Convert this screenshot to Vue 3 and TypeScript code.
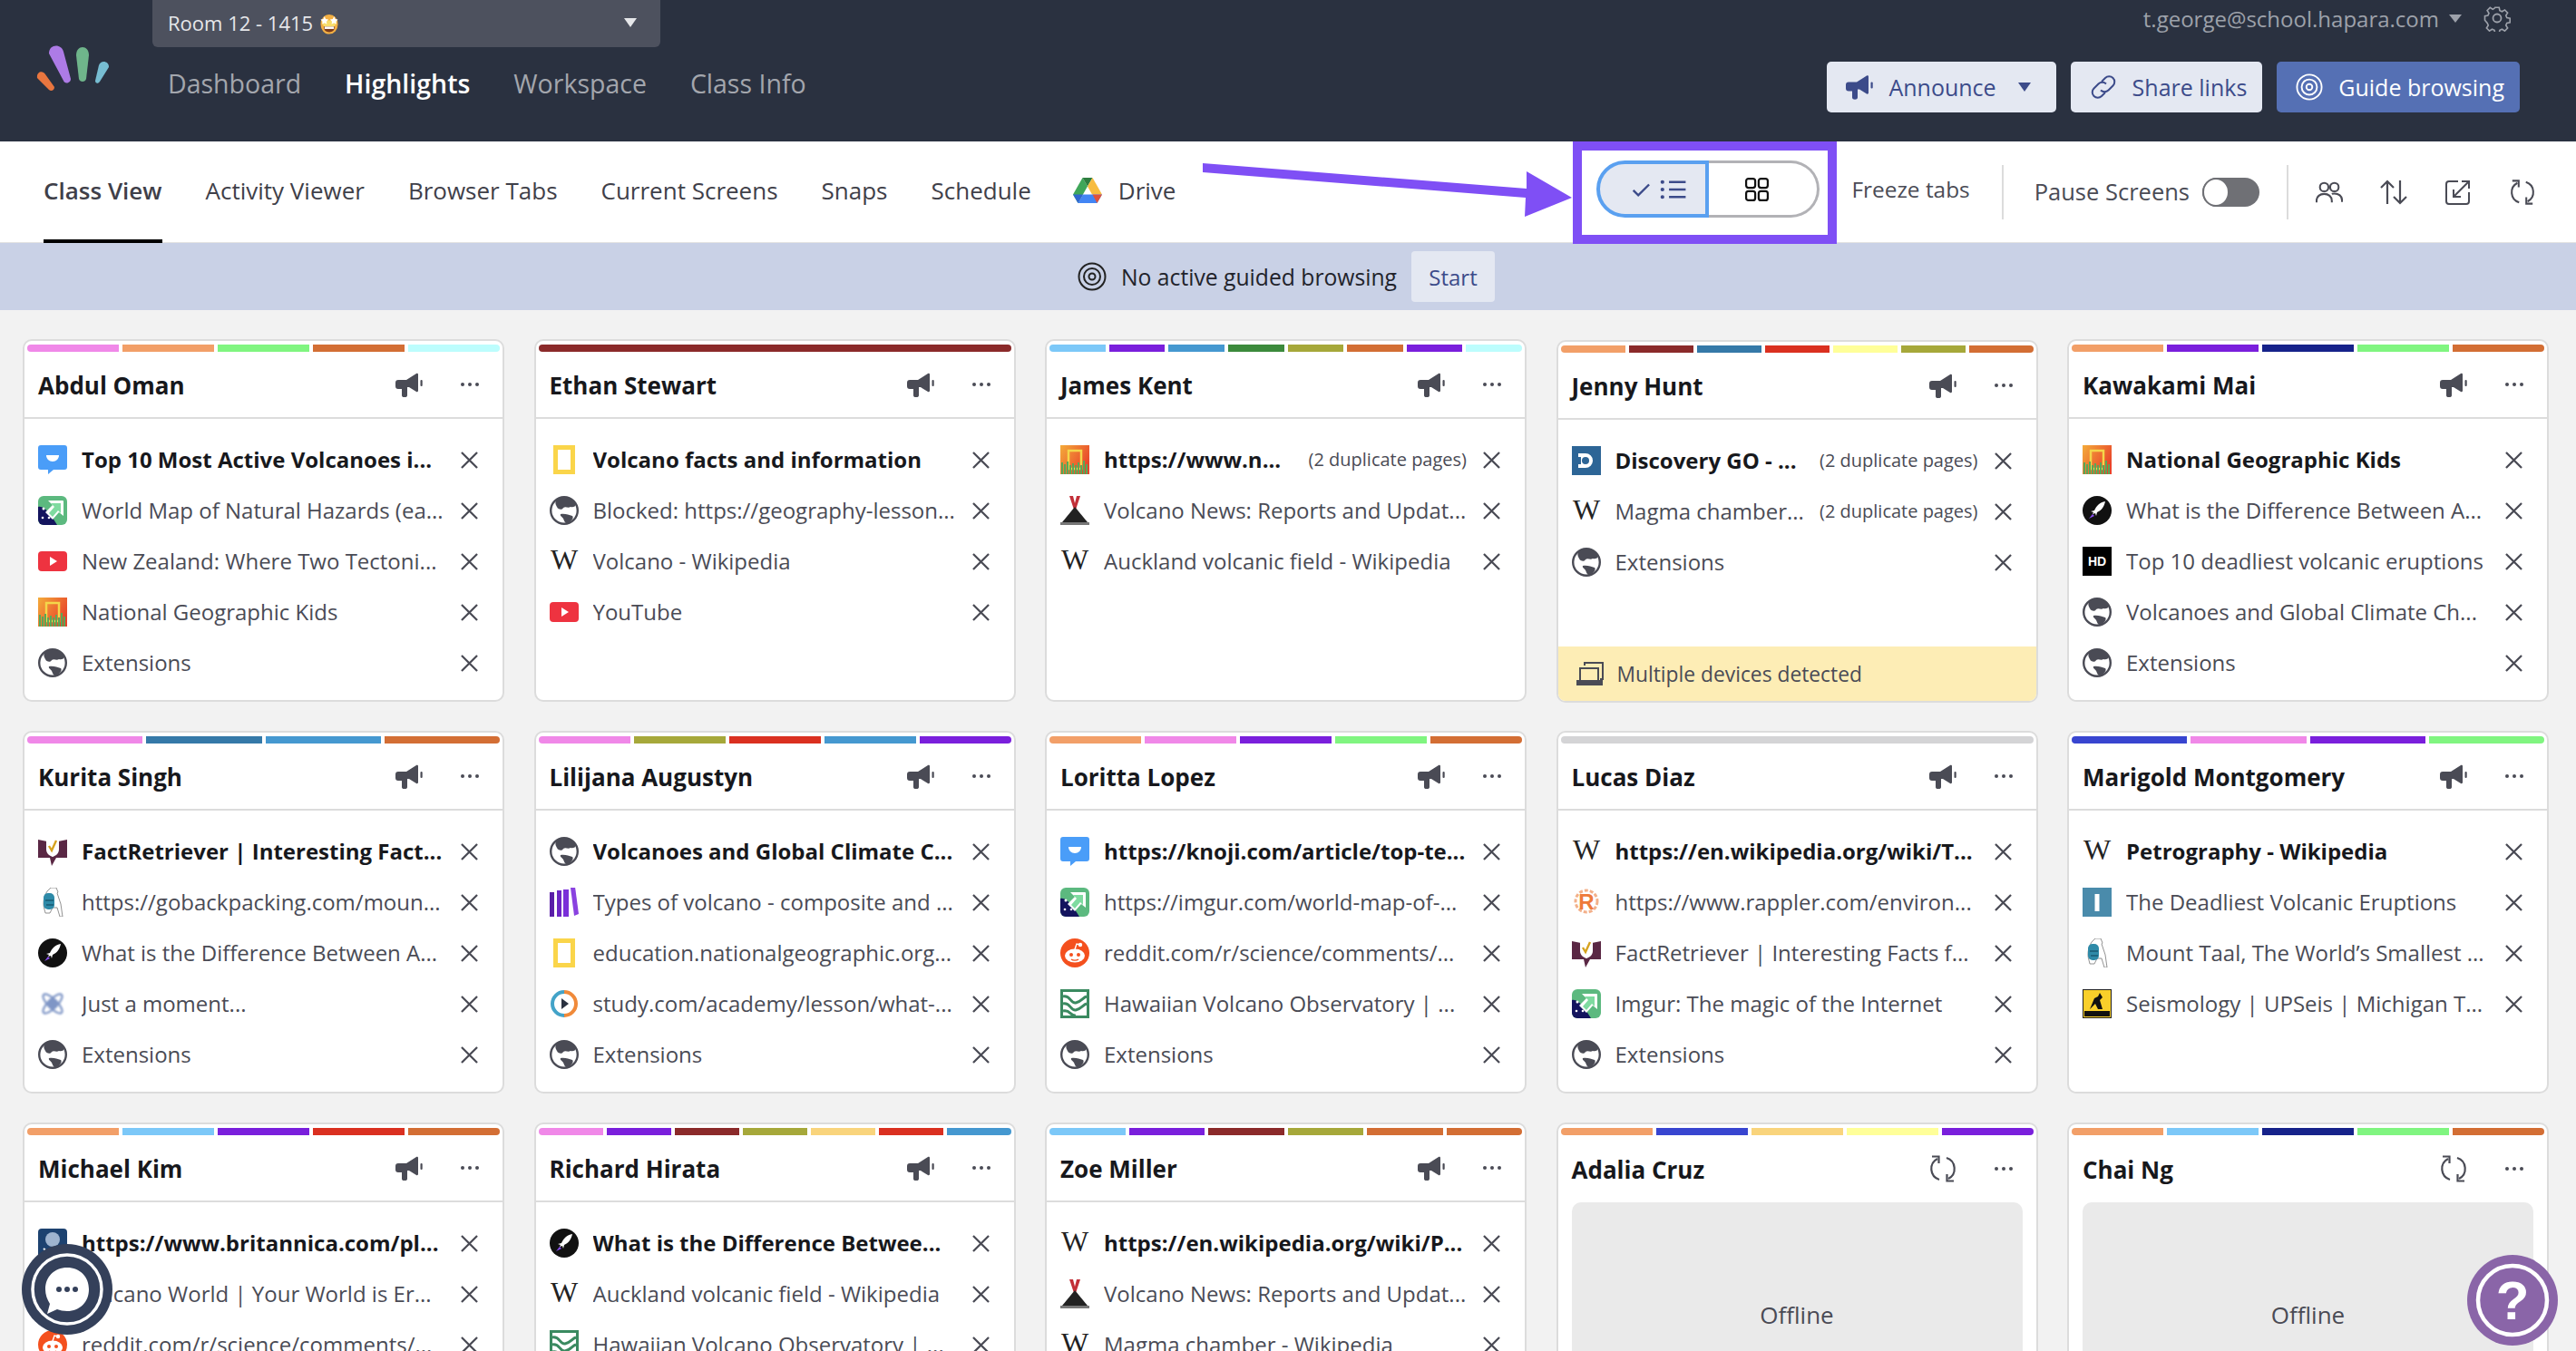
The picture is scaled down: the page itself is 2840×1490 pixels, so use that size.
<script setup lang="ts">
interface Row {
  icon: string
  text: string
  dup?: boolean
}
interface Student {
  name: string
  bars: string[]
  rows?: Row[]
  warning?: string
}

const pink = '#f088e8'
const orange = '#f29f68'
const green = '#80f580'
const burnt = '#d36e34'
const ice = '#bcfdfd'
const maroon = '#8b2a2a'
const sky = '#7cc8f8'
const purple = '#7a1fdc'
const blue = '#4598d0'
const forest = '#3c8a3c'
const olive = '#a6a83a'
const teal = '#3579a8'
const red = '#da3020'
const yellow = '#ffff99'
const navy = '#16228a'
const indigo = '#3845d0'
const sand = '#f9d47c'
const grey = '#d4d4d6'

const ext: Row = { icon: 'globe', text: 'Extensions' }

const students: Student[] = [
  {
    name: 'Abdul Oman',
    bars: [pink, orange, green, burnt, ice],
    rows: [
      { icon: 'knoji', text: 'Top 10 Most Active Volcanoes i...' },
      { icon: 'imgur', text: 'World Map of Natural Hazards (ea...' },
      { icon: 'yt', text: 'New Zealand: Where Two Tectoni...' },
      { icon: 'natgeo', text: 'National Geographic Kids' },
      ext,
    ],
  },
  {
    name: 'Ethan Stewart',
    bars: [maroon],
    rows: [
      { icon: 'frame', text: 'Volcano facts and information' },
      { icon: 'globe', text: 'Blocked: https://geography-lesson...' },
      { icon: 'wiki', text: 'Volcano - Wikipedia' },
      { icon: 'yt', text: 'YouTube' },
    ],
  },
  {
    name: 'James Kent',
    bars: [sky, purple, blue, forest, olive, burnt, purple, ice],
    rows: [
      { icon: 'natgeo', text: 'https://www.n...', dup: true },
      { icon: 'volcano', text: 'Volcano News: Reports and Updat...' },
      { icon: 'wiki', text: 'Auckland volcanic field - Wikipedia' },
    ],
  },
  {
    name: 'Jenny Hunt',
    bars: [orange, maroon, teal, red, yellow, olive, burnt],
    rows: [
      { icon: 'disco', text: 'Discovery GO - ...', dup: true },
      { icon: 'wiki', text: 'Magma chamber...', dup: true },
      ext,
    ],
    warning: 'Multiple devices detected',
  },
  {
    name: 'Kawakami Mai',
    bars: [orange, purple, navy, green, burnt],
    rows: [
      { icon: 'natgeo', text: 'National Geographic Kids' },
      { icon: 'rocket', text: 'What is the Difference Between A...' },
      { icon: 'hd', text: 'Top 10 deadliest volcanic eruptions' },
      { icon: 'globe', text: 'Volcanoes and Global Climate Ch...' },
      ext,
    ],
  },
  {
    name: 'Kurita Singh',
    bars: [pink, teal, blue, burnt],
    rows: [
      { icon: 'fact', text: 'FactRetriever | Interesting Fact...' },
      { icon: 'pack', text: 'https://gobackpacking.com/moun...' },
      { icon: 'rocket', text: 'What is the Difference Between A...' },
      { icon: 'moment', text: 'Just a moment...' },
      ext,
    ],
  },
  {
    name: 'Lilijana Augustyn',
    bars: [pink, olive, red, blue, purple],
    rows: [
      { icon: 'globe', text: 'Volcanoes and Global Climate C...' },
      { icon: 'books', text: 'Types of volcano - composite and ...' },
      { icon: 'frame', text: 'education.nationalgeographic.org...' },
      { icon: 'study', text: 'study.com/academy/lesson/what-...' },
      ext,
    ],
  },
  {
    name: 'Loritta Lopez',
    bars: [orange, pink, purple, green, burnt],
    rows: [
      { icon: 'knoji', text: 'https://knoji.com/article/top-te...' },
      { icon: 'imgur', text: 'https://imgur.com/world-map-of-...' },
      { icon: 'reddit', text: 'reddit.com/r/science/comments/...' },
      { icon: 'usgs', text: 'Hawaiian Volcano Observatory | ...' },
      ext,
    ],
  },
  {
    name: 'Lucas Diaz',
    bars: [grey],
    rows: [
      { icon: 'wiki', text: 'https://en.wikipedia.org/wiki/T...' },
      { icon: 'rappler', text: 'https://www.rappler.com/environ...' },
      { icon: 'fact', text: 'FactRetriever | Interesting Facts f...' },
      { icon: 'imgur', text: 'Imgur: The magic of the Internet' },
      ext,
    ],
  },
  {
    name: 'Marigold Montgomery',
    bars: [indigo, pink, purple, green],
    rows: [
      { icon: 'wiki', text: 'Petrography - Wikipedia' },
      { icon: 'info', text: 'The Deadliest Volcanic Eruptions' },
      { icon: 'pack', text: 'Mount Taal, The World’s Smallest ...' },
      { icon: 'seis', text: 'Seismology | UPSeis | Michigan T...' },
    ],
  },
  {
    name: 'Michael Kim',
    bars: [orange, sky, purple, red, burnt],
    rows: [
      { icon: 'brit', text: 'https://www.britannica.com/pl...' },
      { icon: 'globe', text: 'Volcano World | Your World is Er...' },
      { icon: 'reddit', text: 'reddit.com/r/science/comments/...' },
    ],
  },
  {
    name: 'Richard Hirata',
    bars: [pink, purple, maroon, olive, sand, red, blue],
    rows: [
      { icon: 'rocket', text: 'What is the Difference Betwee...' },
      { icon: 'wiki', text: 'Auckland volcanic field - Wikipedia' },
      { icon: 'usgs', text: 'Hawaiian Volcano Observatory | ...' },
    ],
  },
  {
    name: 'Zoe Miller',
    bars: [sky, purple, maroon, olive, burnt, burnt],
    rows: [
      { icon: 'wiki', text: 'https://en.wikipedia.org/wiki/P...' },
      { icon: 'volcano', text: 'Volcano News: Reports and Updat...' },
      { icon: 'wiki', text: 'Magma chamber - Wikipedia' },
    ],
  },
  { name: 'Adalia Cruz', bars: [orange, indigo, sand, yellow, purple] },
  { name: 'Chai Ng', bars: [orange, sky, navy, green, burnt] },
]

const tabs = ['Class View', 'Activity Viewer', 'Browser Tabs', 'Current Screens', 'Snaps', 'Schedule']
const navItems = ['Dashboard', 'Highlights', 'Workspace', 'Class Info']
</script>

<template>
  <div class="page">
    <svg class="defs" aria-hidden="true">
      <defs>
        <linearGradient id="ngrad" x1="0" y1="0" x2="1" y2="0.6">
          <stop offset="0" stop-color="#f4ac3a" />
          <stop offset="1" stop-color="#e8432a" />
        </linearGradient>
        <filter id="soft"><feGaussianBlur stdDeviation="0.8" /></filter>
        <symbol id="mega" viewBox="0 0 30 27">
          <path d="M3 8h9l11-7c1-.5 2 0 2 1v18c0 1-1 1.500-2 1l-8-5h-2v9c0 3-6 3-6 0v-7H3c-2 0-3-1-3-3v-4c0-2 1-3 3-3z" fill="currentColor" />
          <rect x="27.500" y="8" width="2.200" height="7" rx="1" fill="currentColor" />
        </symbol>
        <symbol id="refresh" viewBox="0 0 30 30">
          <path d="M9 4 A12.500 12.500 0 0 0 11 27 M21 26 A12.500 12.500 0 0 0 19 3" fill="none" stroke="currentColor" stroke-width="2.200" />
          <path d="M3 1.500h7.500v7.500 M27 28.500h-7.500v-7.500" fill="none" stroke="currentColor" stroke-width="2.200" />
        </symbol>
        <symbol id="globe" viewBox="0 0 32 32">
          <circle cx="16" cy="16" r="14.800" fill="#fff" stroke="#4a4b55" stroke-width="2.400" />
          <path d="M8 4C13 0 23 0 28 7c2 3 0 6-5 5-3 2-5-1-8 1-1 3-6 2-7-1-1-2-3-5 0-8z" fill="#4a4b55" />
          <path d="M12 20c5-1 9 1 13 2 2 2-1 6-5 8-3 1-4-3-5-5-1-2-4-3-3-5z" fill="#4a4b55" />
        </symbol>
        <symbol id="knoji" viewBox="0 0 32 32">
          <path d="M3 0h26a3 3 0 0 1 3 3v21a3 3 0 0 1-3 3H17l-6 5v-5H3a3 3 0 0 1-3-3V3a3 3 0 0 1 3-3z" fill="#4a9df8" />
          <path d="M9 11h14c0 4-3 7-7 7s-7-3-7-7z" fill="#fff" />
        </symbol>
        <symbol id="imgur" viewBox="0 0 32 32">
          <rect width="32" height="32" rx="6" fill="#5cb97f" />
          <path d="M0 12c7-2 15 10 21 20H6a6 6 0 0 1-6-6z" fill="#14145e" />
          <circle cx="6" cy="14" r="1.500" fill="#fff" />
          <circle cx="12" cy="24" r="1.300" fill="#fff" />
          <circle cx="5" cy="24" r="1.300" fill="#fff" />
          <path d="M11 5h16a1 1 0 0 1 1 1v16l-5-4-7 8-8-8 8-8z" fill="#fff" />
          <path d="M14 8h11v11l-3-3-6 7-4-4 6-7z" fill="#7fdba0" />
        </symbol>
        <symbol id="yt" viewBox="0 0 32 32">
          <rect y="5" width="32" height="22" rx="4" fill="#ee3340" />
          <path d="M13 11l8 5-8 5z" fill="#fff" />
        </symbol>
        <symbol id="natgeo" viewBox="0 0 32 32">
          <rect width="32" height="32" fill="url(#ngrad)" />
          <rect x="9" y="6" width="14" height="20" fill="none" stroke="#f4d64a" stroke-width="2.500" />
          <path d="M2 32V19M5 32V21M8 32V18M11 32V22M14 32V20M17 32V22M20 32V19M23 32V22M26 32V17M29 32V21" stroke="#58a858" stroke-width="2" />
        </symbol>
        <symbol id="frame" viewBox="0 0 32 32">
          <rect x="6.500" y="2.500" width="19" height="27" fill="#fff" stroke="#fad54a" stroke-width="5" />
        </symbol>
        <symbol id="wiki" viewBox="0 0 32 32">
          <text x="16" y="25" text-anchor="middle" font-family="Liberation Serif, serif" font-size="32" fill="#222">W</text>
        </symbol>
        <symbol id="volcano" viewBox="0 0 32 32">
          <path d="M10 0h4l2 8 2-8h4l-5 15h-2z" fill="#c22f38" />
          <path d="M16 12l14 17H2z" fill="#222" />
          <rect x="0" y="29" width="32" height="3" fill="#777" />
        </symbol>
        <symbol id="disco" viewBox="0 0 32 32">
          <rect width="32" height="32" fill="#2d6596" />
          <path d="M7 8h8a8 8 0 0 1 0 16H7v-4h3v-8H7z" fill="#fff" />
          <circle cx="15" cy="16" r="4" fill="#2d6596" />
        </symbol>
        <symbol id="rocket" viewBox="0 0 32 32">
          <circle cx="16" cy="16" r="16" fill="#111" />
          <path d="M25 6c-6 1-10 5-12 10l-4 1 3 1-1 2 3-1 1 3 1-4c5-2 8-7 9-12z" fill="#fff" />
          <path d="M11 20l-4 5 6-3z" fill="#8a4ff0" />
        </symbol>
        <symbol id="hd" viewBox="0 0 32 32">
          <rect width="32" height="32" fill="#000" />
          <text x="16" y="21" text-anchor="middle" font-family="Liberation Sans, sans-serif" font-weight="700" font-size="14" fill="#fff">HD</text>
        </symbol>
        <symbol id="fact" viewBox="0 0 32 32">
          <path d="M0 3l10 2h12l10-2v20H20l-5 9-2-9H0z" fill="#5a2744" />
          <path d="M9 1h14v13c0 6-7 8-7 8s-7-2-7-8z" fill="#fff" />
          <path d="M12 10l3 5 5-11" fill="none" stroke="#d6a21e" stroke-width="2.400" />
        </symbol>
        <symbol id="pack" viewBox="0 0 32 32">
          <path d="M14 0h6l2 5-1 1 4 12 2 14h-3l-3-10h-5l-3 6H8l-1-4c-2-6-1-14 3-20z" fill="#fff" stroke="#777" stroke-width="0.800" />
          <rect x="6" y="6" width="12" height="18" rx="5" fill="#2e8aa8" />
          <path d="M8 14h9M9 19h8" stroke="#185a72" stroke-width="1.500" />
        </symbol>
        <symbol id="moment" viewBox="0 0 32 32">
          <g fill="none" stroke="#5f7cb8" stroke-width="2.200" filter="url(#soft)" opacity="0.800">
            <ellipse cx="16" cy="16" rx="14" ry="5" transform="rotate(45 16 16)" />
            <ellipse cx="16" cy="16" rx="14" ry="5" transform="rotate(-45 16 16)" />
            <circle cx="16" cy="16" r="5" fill="#5f7cb8" />
          </g>
        </symbol>
        <symbol id="books" viewBox="0 0 32 32">
          <rect x="0" y="5" width="5" height="27" fill="#5a1ea8" />
          <rect x="8" y="3" width="5" height="29" fill="#6c25c4" />
          <rect x="15" y="2" width="6" height="30" fill="#7a2fd8" />
          <path d="M23 0l5-1 4 30-5 2z" fill="#8a42e0" />
        </symbol>
        <symbol id="study" viewBox="0 0 32 32">
          <path d="M16 3a13 13 0 0 1 0 26" fill="none" stroke="#f08a3a" stroke-width="4" />
          <path d="M16 29a13 13 0 0 1 0-26" fill="none" stroke="#43a3c8" stroke-width="4" />
          <circle cx="16" cy="16" r="9" fill="#fff" />
          <path d="M13 10l8 6-8 6z" fill="#2a3140" />
        </symbol>
        <symbol id="reddit" viewBox="0 0 32 32">
          <circle cx="16" cy="16" r="16" fill="#f4501e" />
          <ellipse cx="16" cy="19" rx="11" ry="7.500" fill="#fff" />
          <circle cx="22" cy="7" r="2.200" fill="#fff" />
          <path d="M16 12l2-6 4 1" fill="none" stroke="#fff" stroke-width="1.400" />
          <circle cx="12" cy="18" r="2" fill="#f4501e" />
          <circle cx="20" cy="18" r="2" fill="#f4501e" />
          <path d="M12 23c2 1.500 6 1.500 8 0" fill="none" stroke="#f4501e" stroke-width="1.400" />
        </symbol>
        <symbol id="usgs" viewBox="0 0 32 32">
          <rect x="1.500" y="1.500" width="29" height="29" fill="#fff" stroke="#3a8a60" stroke-width="3" />
          <path d="M3 8c8-2 8 8 14 7s8-6 12-7M3 16c8-2 8 8 14 7s8-6 12-7M3 24c8-2 8 6 14 5" fill="none" stroke="#3a8a60" stroke-width="3" />
        </symbol>
        <symbol id="rappler" viewBox="0 0 32 32">
          <circle cx="16" cy="15" r="12" fill="none" stroke="#f3b08a" stroke-width="3" stroke-dasharray="4 2" />
          <text x="16" y="24" text-anchor="middle" font-family="Liberation Sans, sans-serif" font-weight="700" font-size="24" fill="#ee7a3a">R</text>
        </symbol>
        <symbol id="info" viewBox="0 0 32 32">
          <rect width="32" height="32" fill="#4a8bab" />
          <rect x="13.500" y="7" width="5" height="19" fill="#fff" />
        </symbol>
        <symbol id="seis" viewBox="0 0 32 32">
          <rect width="32" height="32" fill="#f9cf2a" stroke="#222" stroke-width="2" />
          <path d="M19 4l3 5-3 3 3 10h-5l-3-6-6 6 5-12 4-2z" fill="#111" />
          <rect x="2" y="24" width="28" height="6" fill="#111" />
        </symbol>
        <symbol id="brit" viewBox="0 0 32 32">
          <rect width="32" height="32" rx="4" fill="#1d4270" />
          <circle cx="16" cy="12" r="8" fill="#9fb4cf" />
          <path d="M6 22l10 8 10-8" fill="none" stroke="#fff" stroke-width="2" />
        </symbol>
      </defs>
    </svg>

    <header class="topbar">
      <svg class="logo" viewBox="0 0 80 50">
        <path d="M14 9C14-2 28-2 30 7L38 37C38 42 31 43 30 39z" fill="#ad7be6" />
        <path d="M44 11C44-1 58-1 58 11L55 37C54 41 48 41 47 37z" fill="#6fb58b" />
        <path d="M69 22C71 16 80 17 80 24L70 40C68 43 65 42 65 39z" fill="#77bdd2" />
        <path d="M1 36C0 29 7 27 10 32L20 46C20 50 16 51 14 49z" fill="#e9763f" />
      </svg>
      <div class="top-left">
        <div class="room">
          <span class="room-name">Room 12 - 1415</span>
          <svg class="emoji" viewBox="0 0 24 30">
            <ellipse cx="12" cy="17" rx="11" ry="12.500" fill="#f4b043" />
            <path d="M2 12h20l-3 8H5z" fill="#f7dd6a" />
            <path d="M6 7l1.500 3.500 3.500.500-2.500 2.500.500 3.500-3-1.800-3 1.800.500-3.500L1 11l3.500-.500z M18 7l1.500 3.500 3.500.500-2.500 2.500.500 3.500-3-1.800-3 1.800.500-3.500-2.500-2.500 3.500-.500z" fill="#fff" />
            <path d="M5 20h14c0 5-3 7-7 7s-7-2-7-7z" fill="#7a3a1a" />
            <rect x="6" y="20" width="12" height="3" fill="#fff" />
          </svg>
          <span class="room-caret"></span>
        </div>
        <nav class="nav">
          <span v-for="item in navItems" :key="item" class="nav-item" :class="{ active: item === 'Highlights' }">{{ item }}</span>
        </nav>
      </div>
      <div class="top-right">
        <div class="account">
          <span>t.george@school.hapara.com</span>
          <span class="account-caret"></span>
          <svg class="gear" viewBox="0 0 30 30" fill="none" stroke="#9da1aa" stroke-width="1.800">
            <path d="M12.500 2h5l.8 3.800 2.800 1.200 3.300-2.100 3.500 3.500-2.100 3.300 1.200 2.800 3.800.8v5l-3.800.8-1.200 2.800 2.100 3.300-3.500 3.500-3.300-2.100-2.800 1.200-.8 3.800h-5l-.8-3.800-2.800-1.200-3.300 2.100-3.500-3.500 2.100-3.300-1.200-2.800L0 17.500v-5l3.800-.8L5 8.900 2.900 5.600l3.500-3.500 3.300 2.100 2-1.200z" transform="translate(1.500 1.500) scale(.9)" />
            <circle cx="15" cy="15" r="4.500" />
          </svg>
        </div>
        <div class="actions">
          <button class="btn announce">
            <svg class="btn-icon"><use href="#mega" /></svg>
            Announce
            <span class="btn-caret"></span>
          </button>
          <button class="btn share">
            <svg class="btn-icon" viewBox="0 0 30 30" fill="none" stroke="currentColor" stroke-width="2">
              <path d="M13 9l4-4a6 6 0 0 1 8.500 8.500l-5 5a6 6 0 0 1-8.500 0" />
              <path d="M17 21l-4 4a6 6 0 0 1-8.500-8.500l5-5a6 6 0 0 1 8.500 0" />
            </svg>
            Share links
          </button>
          <button class="btn guide">
            <svg class="btn-icon" viewBox="0 0 32 32" fill="none" stroke="currentColor" stroke-width="2">
              <circle cx="16" cy="16" r="14.500" />
              <circle cx="16" cy="16" r="9" />
              <circle cx="16" cy="16" r="3.500" />
            </svg>
            Guide browsing
          </button>
        </div>
      </div>
    </header>

    <div class="toolbar">
      <div class="tabs">
        <span v-for="tab in tabs" :key="tab" class="tab" :class="{ active: tab === 'Class View' }">{{ tab }}</span>
        <span class="tab drive">
          <svg class="drive-icon" viewBox="0 0 32 28">
            <path d="M10.500 0L0 18.500l5.500 9.500L16 9.500z" fill="#3fa659" />
            <path d="M10.500 0h11L16 9.500z" fill="#2e7d3f" />
            <path d="M21.500 0L32 18.500H21L16 9.500z" fill="#f7bc3f" />
            <path d="M11 18.500h21L26.500 28h-21z" fill="#4285f4" />
            <path d="M0 18.500h6L11 18.500 5.500 28z" fill="#2f66d0" />
            <path d="M21.500 18.500H32L26.500 28z" fill="#e0523a" />
          </svg>
          Drive
        </span>
      </div>
      <div class="tools">
        <div class="view-toggle">
          <span class="view-opt selected">
            <svg viewBox="0 0 66 24" class="opt-list" fill="none" stroke="#3c4b8a" stroke-width="2.600">
              <path d="M1 13l6 6L20 6" />
              <path d="M44 3h20M44 12h20M44 21h20" />
              <path d="M36 3h.1M36 12h.1M36 21h.1" stroke-width="4.500" stroke-linecap="round" />
            </svg>
          </span>
          <span class="view-opt plain-opt">
            <svg viewBox="0 0 26 26" class="opt-grid" fill="none" stroke="#111" stroke-width="2.200">
              <rect x="1.100" y="1.100" width="10" height="10" rx="2.500" />
              <rect x="14.900" y="1.100" width="10" height="10" rx="2.500" />
              <rect x="1.100" y="14.900" width="10" height="10" rx="2.500" />
              <rect x="14.900" y="14.900" width="10" height="10" rx="2.500" />
            </svg>
          </span>
        </div>
        <span class="freeze">Freeze tabs</span>
        <span class="sep"></span>
        <span class="pause">Pause Screens</span>
        <span class="switch"><span class="knob"></span></span>
        <span class="sep sep-b"></span>
        <div class="tool-icons">
          <svg viewBox="0 0 32 26" fill="none" stroke="#4a4b55" stroke-width="2.200">
            <circle cx="10" cy="7" r="5" />
            <circle cx="22" cy="7" r="5" />
            <path d="M1 25v-2c0-5 4-8 9-8s9 3 9 8v2" />
            <path d="M19 15c1-.5 2-.500 3-.500 5 0 9 3 9 8v2" />
          </svg>
          <svg viewBox="0 0 30 28" fill="none" stroke="#4a4b55" stroke-width="2.200">
            <path d="M8 27V2M1 9l7-7 7 7" />
            <path d="M22 1v25M15 19l7 7 7-7" />
          </svg>
          <svg viewBox="0 0 28 28" fill="none" stroke="#4a4b55" stroke-width="2">
            <path d="M14 2H4a3 3 0 0 0-3 3v19a3 3 0 0 0 3 3h19a3 3 0 0 0 3-3V14" />
            <path d="M26 2L9 19M9 11v8h8M18 2h8v8" />
          </svg>
          <svg viewBox="0 0 30 30"><use href="#refresh" /></svg>
        </div>
      </div>
    </div>

    <div class="banner">
      <svg class="target" viewBox="0 0 32 32" fill="none" stroke="#222" stroke-width="2">
        <circle cx="16" cy="16" r="14.500" />
        <circle cx="16" cy="16" r="9" />
        <circle cx="16" cy="16" r="3.500" />
      </svg>
      <span class="banner-text">No active guided browsing</span>
      <button class="start">Start</button>
    </div>

    <main class="grid">
      <section v-for="s in students" :key="s.name" class="card" :class="{ nudged: s.name === 'Jenny Hunt' }">
        <div class="bars">
          <span v-for="(c, i) in s.bars" :key="i" class="bar" :style="{ background: c }"></span>
        </div>
        <div class="card-head" :class="{ plain: !s.rows }">
          <span class="name">{{ s.name }}</span>
          <svg v-if="s.rows" class="head-icon"><use href="#mega" /></svg>
          <svg v-else class="head-icon reload"><use href="#refresh" /></svg>
          <span class="dots"><i></i><i></i><i></i></span>
        </div>
        <ul v-if="s.rows" class="rows">
          <li v-for="(r, i) in s.rows" :key="i" class="row" :class="{ first: i === 0 }">
            <svg class="fav"><use :href="'#' + r.icon" /></svg>
            <span class="title">{{ r.text }}</span>
            <span v-if="r.dup" class="dup">(2 duplicate pages)</span>
            <svg class="close" viewBox="0 0 20 20" fill="none" stroke="#4a4b55" stroke-width="2.400">
              <path d="M1 1l18 18M19 1L1 19" />
            </svg>
          </li>
        </ul>
        <div v-else class="offline">Offline</div>
        <div v-if="s.warning" class="warning">
          <svg viewBox="0 0 30 26" class="warn-icon" fill="none" stroke="#4a4b55" stroke-width="2">
            <path d="M9 4V1h20v18h-3" />
            <rect x="4" y="7" width="20" height="14" />
            <rect x="0" y="21" width="28" height="4" fill="#4a4b55" />
          </svg>
          {{ s.warning }}
        </div>
      </section>
    </main>

    <div class="highlight"></div>
    <svg class="arrow" viewBox="0 0 420 70">
      <path d="M6 5L363 33V14L413 43L361 64L362 43L6 15z" fill="#7f4ff5" />
    </svg>

    <div class="chat">
      <svg viewBox="0 0 100 100">
        <circle cx="50" cy="50" r="50" fill="#34405a" />
        <circle cx="50" cy="50" r="38" fill="none" stroke="#fff" stroke-width="3.500" />
        <path d="M50 26c14 0 24 10 24 24s-10 24-24 24c-4 0-8-1-11-2l-11 5 3-11c-3-5-5-10-5-16 0-14 10-24 24-24z" fill="#fff" />
        <circle cx="41" cy="50" r="3" fill="#34405a" />
        <circle cx="50" cy="50" r="3" fill="#34405a" />
        <circle cx="59" cy="50" r="3" fill="#34405a" />
      </svg>
    </div>
    <div class="help">
      <svg viewBox="0 0 100 100">
        <circle cx="50" cy="50" r="50" fill="#8a65a8" />
        <circle cx="50" cy="50" r="38" fill="none" stroke="#fff" stroke-width="4.500" />
        <text x="50" y="71" text-anchor="middle" font-family="Liberation Sans, sans-serif" font-weight="700" font-size="60" fill="#fff">?</text>
      </svg>
    </div>
  </div>
</template>

<style scoped>
.page {
  position: relative;
  width: 2840px;
  height: 1490px;
  overflow: hidden;
  background: #f2f2f2;
  font-family: 'Open Sans', 'Noto Sans', sans-serif;
  color: #4a4b55;
}
.defs {
  position: absolute;
  width: 0;
  height: 0;
}
.topbar {
  display: flex;
  height: 156px;
  padding: 0 62px 0 40px;
  box-sizing: border-box;
  background: #2a3140;
}
.logo {
  width: 80px;
  height: 50px;
  margin-top: 50px;
}
.top-left {
  margin-left: 48px;
}
.room {
  display: flex;
  align-items: center;
  width: 560px;
  height: 52px;
  padding: 0 26px 3px 17px;
  box-sizing: border-box;
  border-radius: 0 0 6px 6px;
  background: #4d515e;
  color: #e6e7ea;
  font-size: 22px;
}
.emoji {
  width: 22px;
  height: 26px;
  margin-left: 7px;
}
.room-caret {
  margin-left: auto;
  border-left: 7px solid transparent;
  border-right: 7px solid transparent;
  border-top: 10px solid #e6e7ea;
}
.nav {
  display: flex;
  gap: 48px;
  margin-top: 19px;
  padding-left: 17px;
  font-size: 28.500px;
  line-height: 42px;
  color: #a3a6ad;
}
.nav-item.active {
  color: #fff;
  font-weight: 600;
}
.top-right {
  display: flex;
  flex-direction: column;
  align-items: flex-end;
  margin-left: auto;
}
.account {
  display: flex;
  align-items: center;
  height: 44px;
  margin: -2px 10px 2px 0;
  font-size: 24px;
  color: #9da1aa;
}
.account-caret {
  margin-left: 11px;
  border-left: 7px solid transparent;
  border-right: 7px solid transparent;
  border-top: 9px solid #9da1aa;
}
.gear {
  width: 30px;
  height: 30px;
  margin-left: 24px;
}
.actions {
  display: flex;
  gap: 16px;
  margin-top: 24px;
}
.btn {
  display: flex;
  align-items: center;
  height: 56px;
  padding: 0 17px 0 21px;
  border: 0;
  border-radius: 5px;
  background: #e4e8f2;
  color: #3c4b8a;
  font-family: inherit;
  font-size: 25px;
  font-weight: 500;
}
.btn-icon {
  width: 30px;
  height: 30px;
  margin-right: 17px;
}
.btn-caret {
  margin-left: 24px;
  border-left: 7px solid transparent;
  border-right: 7px solid transparent;
  border-top: 10px solid #3c4b8a;
}
.btn.announce {
  padding-right: 28px;
}
.btn.guide {
  background: #5570b4;
  color: #fff;
}
.toolbar {
  display: flex;
  align-items: stretch;
  justify-content: space-between;
  height: 112px;
  padding: 0 44px 0 48px;
  box-sizing: border-box;
  background: #fff;
  border-bottom: 1px solid #e2e2e2;
}
.tabs {
  display: flex;
  gap: 48px;
  font-size: 26px;
  color: #3f4049;
}
.tab {
  display: flex;
  align-items: center;
  height: 112px;
  box-sizing: border-box;
  padding-bottom: 4px;
}
.tab.active {
  border-bottom: 4px solid #000;
  padding-bottom: 0;
  font-weight: 600;
}
.drive-icon {
  width: 32px;
  height: 28px;
  margin: 0 18px 0 -2px;
}
.tools {
  display: flex;
  align-items: center;
}
.view-toggle {
  display: flex;
  width: 246px;
  height: 63px;
  margin-top: -6px;
  margin-right: 35px;
}
.view-opt {
  display: flex;
  align-items: center;
  justify-content: center;
  flex: 1;
  box-sizing: border-box;
  border: 3px solid #b2b2b6;
  border-left: 0;
  border-radius: 0 32px 32px 0;
}
.view-opt.plain-opt {
  padding-right: 14px;
}
.view-opt.selected {
  flex: 0 0 124px;
  border: 4px solid #5aa0f0;
  border-radius: 32px 0 0 32px;
  background: #e4e8f2;
  padding-left: 16px;
}
.opt-list {
  width: 64px;
  height: 22px;
}
.opt-grid {
  width: 26px;
  height: 26px;
}
.freeze {
  margin-top: -6px;
  font-size: 24.400px;
  font-weight: 500;
}
.sep {
  width: 2px;
  height: 60px;
  margin-left: 35px;
  background: #dcdcdc;
}
.pause {
  margin-left: 34px;
  margin-top: -2px;
  font-size: 25.500px;
  font-weight: 500;
}
.switch {
  display: flex;
  align-items: center;
  width: 63px;
  height: 32px;
  margin-left: 14px;
  border-radius: 16px;
  background: #6f7075;
}
.knob {
  width: 30px;
  height: 32px;
  box-sizing: border-box;
  border: 2px solid #6f7075;
  border-radius: 50%;
  background: #fff;
}
.sep-b {
  margin-left: 30px;
}
.tool-icons {
  display: flex;
  gap: 41px;
  margin-left: 30px;
}
.tool-icons svg {
  width: 30px;
  height: 28px;
  color: #4a4b55;
}
.banner {
  display: flex;
  align-items: center;
  justify-content: center;
  height: 74px;
  padding-right: 4px;
  background: #c9d1e6;
  color: #22232b;
  font-size: 24.700px;
  font-weight: 500;
}
.target {
  width: 32px;
  height: 32px;
  margin-right: 16px;
}
.start {
  height: 56px;
  width: 92px;
  margin-left: 16px;
  border: 0;
  border-radius: 4px;
  background: #e4e8f2;
  color: #3c4b8a;
  font-family: inherit;
  font-size: 24px;
  font-weight: 500;
}
.grid {
  display: grid;
  grid-template-columns: repeat(5, 531px);
  grid-auto-rows: 400px;
  gap: 32px 32.500px;
  padding: 32px 0 0 25px;
}
.card {
  display: flex;
  flex-direction: column;
  box-sizing: border-box;
  border: 2px solid #dcdcdc;
  border-radius: 10px;
  background: #fff;
  overflow: hidden;
}
.card.nudged {
  margin: 1px 0 -1px;
}
.bars {
  display: flex;
  gap: 4px;
  height: 8px;
  margin: 4px 3px 0;
  border-radius: 4px;
  overflow: hidden;
  flex: none;
}
.bar {
  flex: 1;
}
.card-head {
  display: flex;
  align-items: center;
  flex: none;
  height: 74px;
  padding: 0 26px 0 15px;
  box-sizing: border-box;
  border-bottom: 2px solid #dcdcdc;
}
.card-head.plain {
  border-bottom: 0;
}
.name {
  flex: 1;
  padding-top: 2px;
  color: #17181c;
  font-size: 26px;
  font-weight: 700;
}
.head-icon {
  width: 30px;
  height: 27px;
  color: #4a4b55;
}
.head-icon.reload {
  height: 30px;
}
.dots {
  display: flex;
  gap: 4px;
  width: 20px;
  margin-left: 42px;
}
.dots i {
  width: 4px;
  height: 4px;
  border-radius: 50%;
  background: #4a4b55;
}
.rows {
  margin: 0;
  padding: 17px 27px 0 15px;
  list-style: none;
}
.row {
  display: flex;
  align-items: center;
  height: 56px;
  font-size: 24px;
}
.fav {
  flex: none;
  width: 32px;
  height: 32px;
  margin-right: 16px;
}
.title {
  flex: 1;
  min-width: 0;
  padding-bottom: 2px;
  white-space: nowrap;
  overflow: hidden;
}
.row.first .title {
  color: #17181c;
  font-weight: 700;
}
.dup {
  flex: none;
  margin: 0 10px 2px 8px;
  font-size: 20px;
}
.close {
  flex: none;
  width: 19px;
  height: 19px;
  margin-left: 8px;
}
.warning {
  display: flex;
  align-items: center;
  margin-top: auto;
  height: 60px;
  padding-left: 20px;
  background: #fdedb5;
  font-size: 22.800px;
  font-weight: 500;
}
.warn-icon {
  width: 30px;
  height: 26px;
  margin-right: 15px;
}
.offline {
  display: flex;
  align-items: center;
  justify-content: center;
  flex: 1;
  margin: 0 15px;
  padding-bottom: 62px;
  border-radius: 10px 10px 0 0;
  background: #eaeaea;
  font-size: 26px;
}
.highlight {
  position: absolute;
  left: 1734px;
  top: 156px;
  width: 291px;
  height: 113px;
  box-sizing: border-box;
  border: 10px solid #7f4ff5;
}
.arrow {
  position: absolute;
  left: 1320px;
  top: 175px;
  width: 420px;
  height: 70px;
}
.chat,
.help {
  position: absolute;
  width: 100px;
  height: 100px;
}
.chat {
  left: 24px;
  top: 1372px;
}
.help {
  left: 2720px;
  top: 1384px;
}
</style>

<style>
html,
body {
  margin: 0;
  overflow: hidden;
}
</style>
